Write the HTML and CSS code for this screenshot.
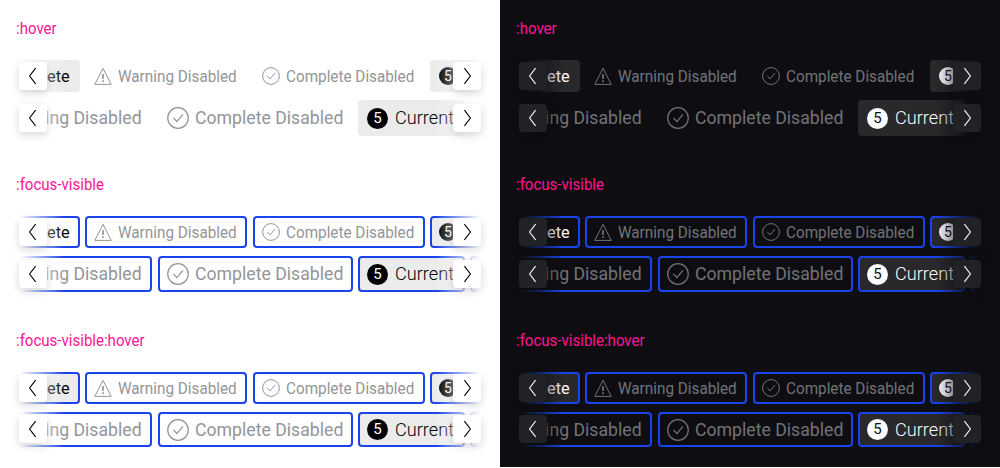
FILE: index.html
```html
<!DOCTYPE html>
<html lang="en">
<head>
<meta charset="utf-8">
<title>Stepper states</title>
<link rel="stylesheet" href="styles.css">
<script src="stepper.js" defer></script>
</head>
<body>
<svg class="sprite" aria-hidden="true">
  <symbol id="warning" viewBox="0 0 18 18"><path d="M9 1.3 17.2 17.4H.8Z"/><path d="M9 7v5M9 13.2v1.8" stroke-width="1.7"/></symbol>
  <symbol id="check" viewBox="0 0 18 18"><circle cx="9" cy="9" r="8.4"/><path d="m5.2 8.9 2.9 3L13 6"/></symbol>
  <symbol id="prev" viewBox="0 0 28 28"><path d="M16.6 6.2 10.6 14l6 7.8"/></symbol>
  <symbol id="next" viewBox="0 0 28 28"><path d="m11.4 6.2 6 7.8-6 7.8"/></symbol>
</svg>
<main class="board">
  <div class="theme light">
    <section class="state hover"><h2>:hover</h2><div class="stepper small"></div><div class="stepper large"></div></section>
    <section class="state focus"><h2>:focus-visible</h2><div class="stepper small"></div><div class="stepper large"></div></section>
    <section class="state focus hover last"><h2>:focus-visible:hover</h2><div class="stepper small"></div><div class="stepper large"></div></section>
  </div>
  <div class="theme dark">
    <section class="state hover"><h2>:hover</h2><div class="stepper small"></div><div class="stepper large"></div></section>
    <section class="state focus"><h2>:focus-visible</h2><div class="stepper small"></div><div class="stepper large"></div></section>
    <section class="state focus hover last"><h2>:focus-visible:hover</h2><div class="stepper small"></div><div class="stepper large"></div></section>
  </div>
</main>
</body>
</html>
```

FILE: stepper.js
```js
const icon = (name) => `<svg class="icon"><use href="#${name}"/></svg>`;
const step = (cls, mark, label) =>
  `<div class="step ${cls}">${mark}<span class="label">${label}</span></div>`;
const warning = step("warn disabled", icon("warning"), "Warning Disabled");
const complete = step("comp disabled", icon("check"), "Complete Disabled");
const current = (label) => step("current", '<span class="num">5</span>', label);

document.querySelectorAll(".stepper").forEach((el) => {
  const steps = el.classList.contains("small")
    ? step("first", "", "Complete") + warning + complete + current("")
    : warning + complete + current("Current") + step("rest", "", "");
  el.innerHTML =
    `<div class="track">${steps}</div>` +
    `<button class="nav prev" aria-label="Previous"><svg><use href="#prev"/></svg></button>` +
    `<button class="nav next" aria-label="Next"><svg><use href="#next"/></svg></button>`;
});
```

FILE: styles.css
```css
* { box-sizing: border-box; }
body { margin: 0; background: #fff; font-family: Roboto, "Liberation Sans", sans-serif; overflow: hidden; }
.sprite { position: absolute; width: 0; height: 0; }
svg { fill: none; stroke: currentColor; }
.board { display: flex; height: 467px; }
.theme { width: 500px; padding: 0 16px; background: var(--bg); color: var(--fg); }
.light {
  --bg: #fff; --clear: rgba(255,255,255,0); --fg: #010205; --disabled: #949598;
  --fill: #ebebeb; --button: #fff; --shadow: 0 3px 8px rgba(0,0,0,.16);
}
.dark {
  --bg: #0e0e12; --clear: rgba(14,14,18,0); --fg: #fbfcff; --disabled: #727378;
  --fill: #29292b; --button: #212225; --shadow: 0 3px 8px rgba(0,0,0,.16);
}
.state { height: 156px; padding-top: 16px; }
h2 { margin: 0 0 20px; height: 24px; font-size: 16px; line-height: 25px; font-weight: 400; color: #ff1493; transform: scaleX(.94); transform-origin: left; }
.stepper { position: relative; height: 32px; margin-bottom: 8px; }
.stepper.large { height: 36px; }
.last .large { height: 35px; }
.track { display: flex; height: 100%; margin: 0 3px; overflow: hidden; }
.stepper::before, .stepper::after { content: ""; position: absolute; top: 0; bottom: 0; width: 48px; z-index: 1; }
.stepper::before { left: 0; background: linear-gradient(to right, var(--bg) 10%, var(--clear)); }
.stepper::after { right: 0; background: linear-gradient(to left, var(--bg) 10%, var(--clear)); }
.step { display: flex; flex: none; align-items: center; gap: 6px; padding: 0 7px; border: 2px solid transparent; border-radius: 4px; white-space: nowrap; font-size: 16px; line-height: 24px; }
.large .step { font-size: 19px; }
.label { transform: scaleX(.955); transform-origin: left; }
.small .label { padding-top: 1px; }
.large .label { transform: scaleX(.93); transform-origin: left; }
.focus .step { border-color: #1a44ea; }
.disabled { color: var(--disabled); }
.icon { width: 18px; height: 18px; flex: none; }
.large .icon { width: 22px; height: 22px; }
.first { width: 100px; margin: 0 5px 0 -39px; justify-content: flex-end; padding-right: 8px; }
.first .label { transform: scaleX(1.02); transform-origin: right; }
.hover .first, .current { background-color: var(--fill); }
.small .warn { width: 162px; margin-right: 6px; }
.small .comp { width: 172px; margin-right: 5px; }
.small .current { width: 96px; }
.large .warn { width: 190px; margin: 0 6px 0 -57px; justify-content: flex-end; padding-right: 8px; }
.large .warn .label { transform-origin: right; }
.large .comp { width: 195px; margin-right: 5px; }
.large .current { width: 107px; margin-right: 5px; }
.large .current .label { font-weight: 300; transform: scaleX(.955); }
.rest { width: 60px; }
.num { display: grid; place-items: center; width: 18px; height: 18px; border-radius: 50%; background: var(--fg); color: var(--bg); font-size: 14px; line-height: 1; flex: none; }
.large .num { width: 21px; height: 21px; margin-right: 1px; font-size: 15px; }
.nav { position: absolute; z-index: 2; top: 2px; width: 28px; height: 28px; padding: 0; border: 0; border-radius: 4px; background: var(--button); color: var(--fg); box-shadow: var(--shadow); }
.large .nav { top: 4px; }
.last .large .nav { top: 3px; }
.nav svg { display: block; width: 28px; height: 28px; stroke-width: 1.1; }
.prev { left: 3px; }
.next { right: 3px; }
```
